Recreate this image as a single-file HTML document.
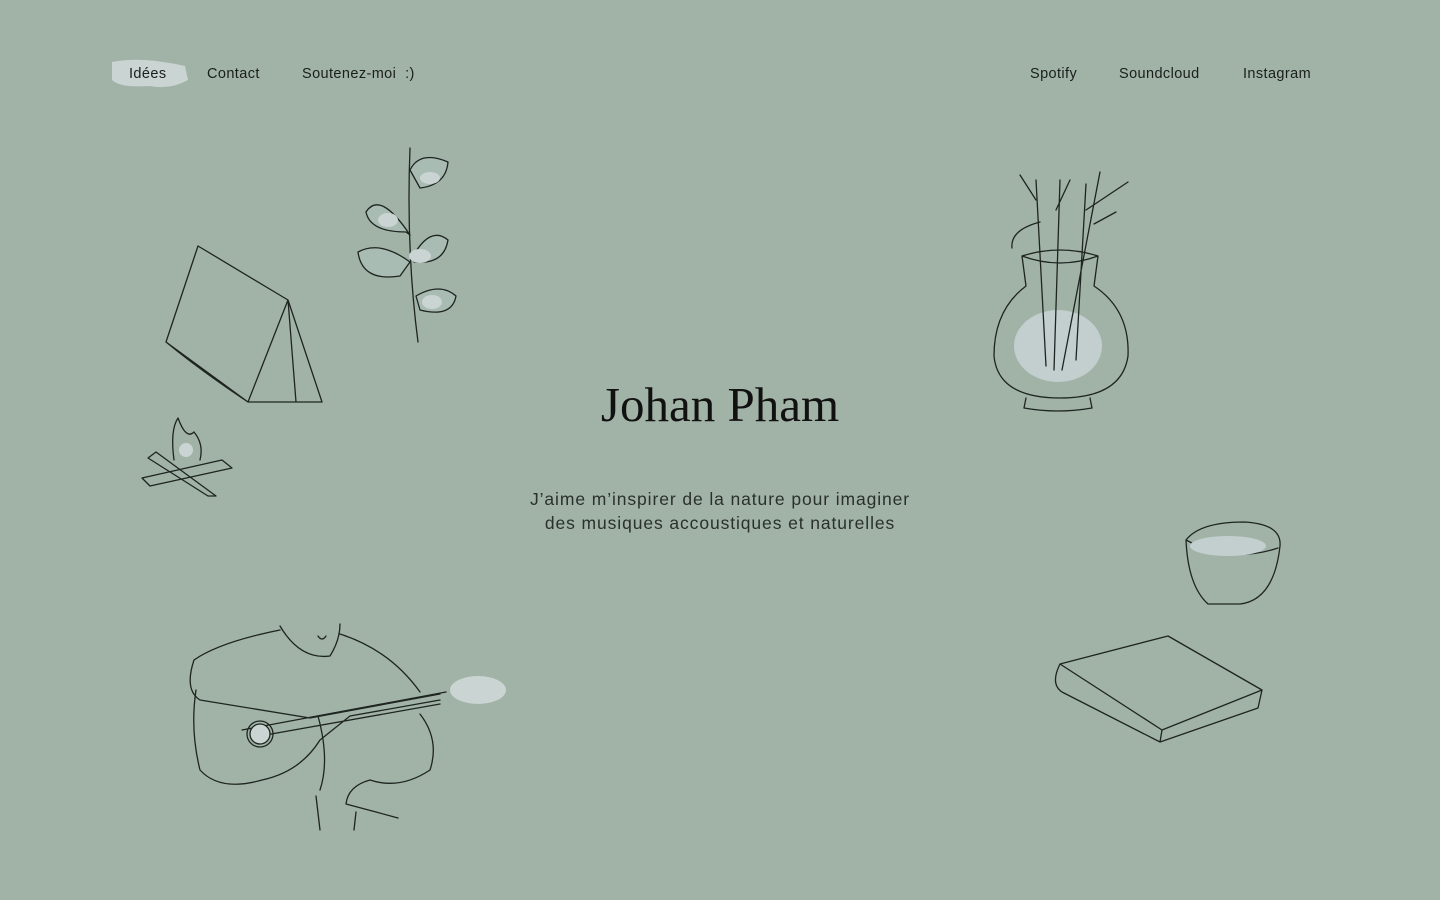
<!DOCTYPE html>
<html><head><meta charset="utf-8"><style>
html,body{margin:0;width:1440px;height:900px;background:#a1b3a7;overflow:hidden;font-family:"Liberation Sans",sans-serif;color:#1a1f1c}
.nav{position:absolute;top:66px;font-size:14.5px;letter-spacing:.4px}
.nav span{position:absolute;white-space:nowrap}
h1{position:absolute;top:376px;left:0;width:1440px;text-align:center;margin:0;font-family:"Liberation Serif",serif;font-weight:400;font-size:49px;color:#111;letter-spacing:0px}
p{position:absolute;top:487px;left:0;width:1440px;text-align:center;margin:0;font-size:17.5px;line-height:24px;color:#2a302c;font-weight:300;letter-spacing:.9px}
svg{position:absolute;left:0;top:0}
</style></head><body>
<svg width="1440" height="900" fill="none" stroke="#1e2420" stroke-width="1.3" stroke-linecap="round" stroke-linejoin="round">
<path d="M112 62 Q140 56 185 66 L188 80 Q170 90 150 86 Q120 88 112 80Z" fill="#c9d4d3" stroke="none"/>
<path d="M198 246 L166 342 L248 402 L322 402 L288 300 Z M198 246 L288 300 M288 300 L248 402 M288 300 L296 402 M166 342 Q200 370 248 402"/>
<path d="M142 478 L222 460 L232 468 L150 486 Z M156 452 L216 496 L208 496 L148 458 Z M174 460 Q170 430 178 418 Q186 440 194 432 Q204 444 200 460" />
<circle cx="186" cy="450" r="7" fill="#c9d4d3" stroke="none"/>
<path d="M410 148 Q406 250 418 342"/>
<path d="M410 170 Q420 150 448 162 Q446 185 420 188 Z M410 235 Q380 190 366 212 Q370 232 406 232 Z M412 258 Q430 225 448 240 Q444 265 414 262 Z M410 262 Q380 240 358 252 Q362 282 400 276 Z M416 296 Q440 282 456 296 Q452 318 420 310 Z" fill="#a9bcb3"/>
<ellipse cx="430" cy="178" rx="10" ry="6" fill="#c9d4d3" stroke="none"/><ellipse cx="388" cy="220" rx="10" ry="7" fill="#c9d4d3" stroke="none"/><ellipse cx="420" cy="256" rx="11" ry="7" fill="#c9d4d3" stroke="none"/><ellipse cx="432" cy="302" rx="10" ry="7" fill="#c9d4d3" stroke="none"/>
<path d="M1022 256 Q1060 244 1098 256 L1094 286 Q1130 310 1128 356 Q1122 398 1060 398 Q998 398 994 356 Q994 310 1026 286 Z M1022 256 Q1060 270 1098 256 M1026 398 L1024 408 Q1058 414 1092 408 L1090 398"/>
<ellipse cx="1058" cy="346" rx="44" ry="36" fill="#c3cfcf" stroke="none"/>
<path d="M1036 180 L1046 366 M1060 180 L1054 370 M1100 172 L1062 370 M1086 184 L1076 360 M1036 200 L1020 175 M1040 222 Q1010 230 1012 248 M1056 210 L1070 180 M1086 210 L1128 182 M1094 224 L1116 212"/>
<path d="M1186 540 Q1200 522 1244 522 Q1282 524 1280 546 Q1274 600 1240 604 L1208 604 Q1188 586 1186 540 Z M1186 540 Q1230 564 1278 548"/>
<ellipse cx="1228" cy="546" rx="38" ry="10" fill="#c3cfcf" stroke="none"/>
<path d="M1060 664 L1168 636 L1262 690 L1162 730 Z M1060 664 Q1050 684 1062 692 L1160 742 L1258 708 L1262 690 M1162 730 L1160 742"/>
<path d="M280 626 Q300 660 330 656 Q340 640 340 624 M318 636 Q322 642 326 636 M280 630 Q220 642 194 660 Q184 690 200 700 M340 634 Q390 650 420 692 M196 690 Q190 730 200 770 Q220 792 262 780 Q300 772 320 740 L350 716 L440 700 M200 700 L310 718 L440 694 M242 730 L446 692 M260 736 L440 704 M420 714 Q440 740 430 770 Q400 790 370 780 Q348 786 346 804 L376 812 L398 818 M320 830 L316 796 M354 830 L356 812 M318 716 Q330 760 320 790"/>
<circle cx="260" cy="734" r="13"/><circle cx="260" cy="734" r="10" fill="#c9d4d3"/>
<ellipse cx="478" cy="690" rx="28" ry="14" fill="#c9d4d3" stroke="none"/>
</svg>
<div class="nav">
<span style="left:129px">Idées</span><span style="left:207px">Contact</span><span style="left:302px">Soutenez-moi &nbsp;:)</span>
<span style="left:1030px">Spotify</span><span style="left:1119px">Soundcloud</span><span style="left:1243px">Instagram</span>
</div>
<h1>Johan Pham</h1>
<p>J’aime m’inspirer de la nature pour imaginer<br>des musiques accoustiques et naturelles</p>
</body></html>
